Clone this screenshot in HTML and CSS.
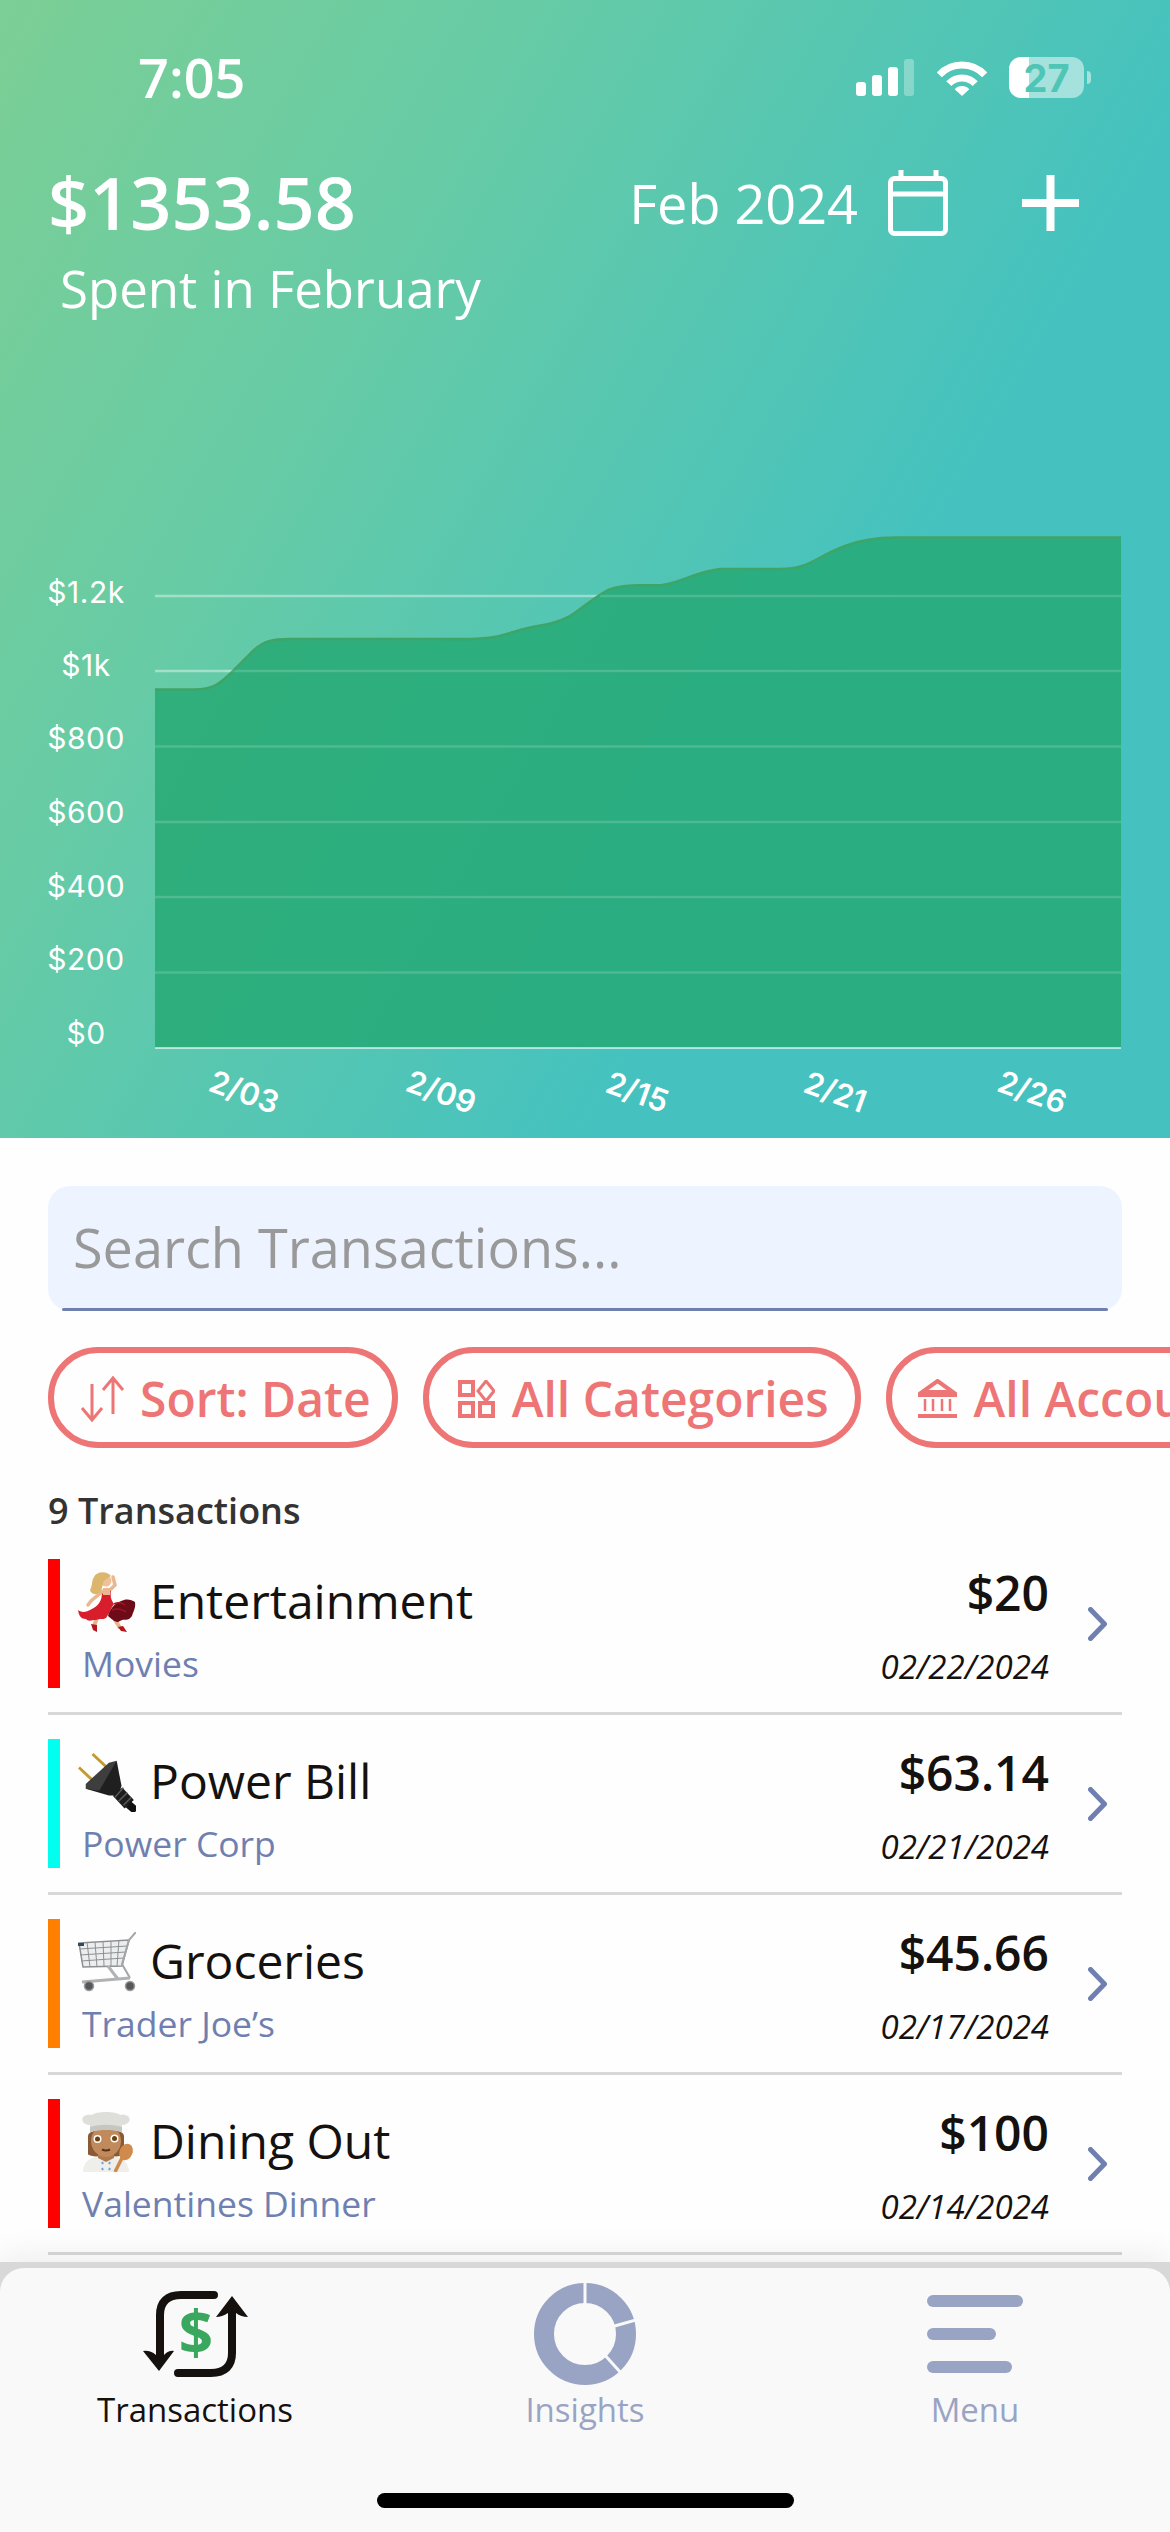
FILE: index.html
```html
<!DOCTYPE html>
<html lang="en">
<head>
  <meta charset="UTF-8" />
  <meta name="viewport" content="width=device-width, initial-scale=1.0"/>
  <title>Transactions</title>
  <link rel="stylesheet" href="styles.css">
</head>
<body>
<div class="screen">

  <header class="hero">
    <div class="status-bar">
      <span class="clock">7:05</span>
      <div class="status-icons">
        <svg class="signal" viewBox="0 0 58 37">
          <rect x="0" y="23" width="10" height="14" rx="3" fill="#fff"/>
          <rect x="16" y="16" width="10" height="21" rx="3" fill="#fff"/>
          <rect x="32" y="8" width="10" height="29" rx="3" fill="#fff"/>
          <rect x="48" y="0" width="10" height="37" rx="3" fill="#fff" opacity="0.3"/>
        </svg>
        <svg class="wifi" viewBox="0 0 50 37">
          <path d="M2.3 15.9A31 31 0 0 1 47.7 15.9" fill="none" stroke="#fff" stroke-width="7"/>
          <path d="M11.8 24.7A18 18 0 0 1 38.2 24.7" fill="none" stroke="#fff" stroke-width="7"/>
          <path d="M25 37L17.7 30.2A10 10 0 0 1 32.3 30.2Z" fill="#fff"/>
        </svg>
        <div class="battery">27</div>
      </div>
    </div>

    <div class="summary">
      <div>
        <div class="spent-amount">$1353.58</div>
        <div class="spent-label">Spent in February</div>
      </div>
      <div class="period">
        <span class="period-text">Feb 2024</span>
        <svg class="calendar" viewBox="0 0 60 66" fill="none" stroke="#fff" stroke-width="5">
          <rect x="2.5" y="8.5" width="55" height="55" rx="4"/>
          <path d="M2.5 24H57.5M13 0V8M48 0V8"/>
        </svg>
        <svg class="plus" viewBox="0 0 57 56" fill="none" stroke="#fff" stroke-width="8">
          <path d="M28.5 0V56M0 28H57"/>
        </svg>
      </div>
    </div>

    <svg class="chart" viewBox="0 500 1170 638">
      <path class="grid-back" d="M155 596H1121M155 671H1121M155 746.5H1121M155 822H1121M155 897H1121M155 972.5H1121"/>
      <path class="area" d="M155 689.5H195C212 689.5 220 684 232 672L254 650C264 641 272 639 290 639H470C500 639 510 632 528 628C545 624 552 625 570 616C580 610 590 600 608 590C618 586 628 585 662 585C680 583 695 572 720 569H780C810 569 815 557 845 546C860 540 875 537 900 537.5H1121V1048H155Z"/>
      <path class="area-line" d="M155 689.5H195C212 689.5 220 684 232 672L254 650C264 641 272 639 290 639H470C500 639 510 632 528 628C545 624 552 625 570 616C580 610 590 600 608 590C618 586 628 585 662 585C680 583 695 572 720 569H780C810 569 815 557 845 546C860 540 875 537 900 537.5H1121"/>
      <path class="grid-front" d="M225 671H1121M155 746.5H1121M155 822H1121M155 897H1121M155 972.5H1121M600 596H1121"/>
      <path d="M155 1048H1121" stroke="#fff" stroke-opacity="0.6" stroke-width="2"/>
      <g class="y-labels">
        <text x="86" y="603">$1.2k</text>
        <text x="86" y="676">$1k</text>
        <text x="86" y="749">$800</text>
        <text x="86" y="823">$600</text>
        <text x="86" y="896.5">$400</text>
        <text x="86" y="970">$200</text>
        <text x="86" y="1044">$0</text>
      </g>
      <g class="x-labels">
        <text transform="translate(244 1093) rotate(20)" y="10">2/03</text>
        <text transform="translate(441 1093) rotate(20)" y="10">2/09</text>
        <text transform="translate(637 1093) rotate(20)" y="10">2/15</text>
        <text transform="translate(835 1093) rotate(20)" y="10">2/21</text>
        <text transform="translate(1032 1093) rotate(20)" y="10">2/26</text>
      </g>
    </svg>
  </header>

  <div class="search-box">Search Transactions...</div>

  <div class="filters">
    <div class="pill">
      <svg class="pill-icon sort-icon" viewBox="0 0 45 46" fill="none" stroke="#ee7575" stroke-width="3">
        <path d="M12 8V44M2 32L12 44L22 32"/>
        <path d="M33 2V38M23 14L33 2L43 14"/>
      </svg>
      Sort: Date
    </div>
    <div class="pill pill-categories">
      <svg class="pill-icon cat-icon" viewBox="0 0 37 38" fill="none" stroke="#ee7575" stroke-width="4">
        <rect x="2" y="2" width="13" height="13"/>
        <path d="M28 1L36 11L28 21L20 11Z" stroke-width="3"/>
        <rect x="2" y="23" width="13" height="13"/>
        <rect x="22" y="23" width="13" height="13"/>
      </svg>
      All Categories
    </div>
    <div class="pill">
      <svg class="pill-icon bank-icon" viewBox="0 0 39 39" fill="none" stroke="#ee7575">
        <path d="M19.5 2L35 13H4Z" stroke-width="4"/>
        <path d="M0 16H39M0 37H39" stroke-width="4"/>
        <path d="M7 20V32M15 20V32M24 20V32M32 20V32" stroke-width="2.5"/>
      </svg>
      All Accounts
    </div>
  </div>

  <div class="count">9 Transactions</div>

  <ul class="tx-list">
    <li class="tx-row">
      <span class="tx-bar bar-red"></span>
      <div class="tx-main">
        <div class="tx-title">
          <svg class="emoji" viewBox="0 0 58 60">
            <path d="M19 46L16 54M36 46L42 56" stroke="#e6b48c" stroke-width="4" fill="none"/>
            <path d="M13 52L19 53L19 60L15 58ZM40 55L45 54L49 60L43 59Z" fill="#b5161e"/>
            <path d="M24 20C24 30 20 34 12 38C7 41 2 40 0 38C1 44 3 47 8 47C10 50 14 48 18 48C22 46 25 48 28 46C31 42 33 36 36 32C33 28 32 24 33 18Z" fill="#d81e2c"/>
            <path d="M30 44C32 36 38 30 46 28C50 27 54 28 57 30C58 36 55 40 54 44C50 50 46 46 42 49C38 52 34 47 30 44Z" fill="#6d0c18"/>
            <path d="M36 32C40 30 44 31 47 33M34 38C38 36 44 37 48 40" stroke="#a81422" stroke-width="1.5" fill="none"/>
            <path d="M25 19L13 29L10 33M33 17L37 13L35 5" stroke="#eab78f" stroke-width="3.5" fill="none" stroke-linecap="round"/>
            <path d="M25 16H32V23H25Z" fill="#eab78f"/>
            <circle cx="28" cy="9" r="5.5" fill="#f0c09a"/>
            <path d="M33 4C29 -1 19 -1 16 5C13 10 15 13 12 18C13 22 18 24 22 20C25 17 24 12 26 9C28 7 30 6 33 4Z" fill="#dcb66c"/>
          </svg>
          <span>Entertainment</span>
        </div>
        <div class="tx-sub">Movies</div>
      </div>
      <div class="tx-side">
        <div class="tx-amount">$20</div>
        <div class="tx-date">02/22/2024</div>
      </div>
      <svg class="chevron" viewBox="0 0 19 34" fill="none" stroke="#6f80b0" stroke-width="5" stroke-linecap="round" stroke-linejoin="round">
        <path d="M2.5 2.5L16.5 17L2.5 31.5"/>
      </svg>
    </li>

    <li class="tx-row">
      <span class="tx-bar bar-cyan"></span>
      <div class="tx-main">
        <div class="tx-title">
          <svg class="emoji" viewBox="0 0 60 60">
            <path d="M15 1L31 16M1 15L17 30" stroke="#c49a2c" stroke-width="3" fill="none"/>
            <path d="M40 8L45 34L42 44L32 44L8 37Z" fill="#1f1f1f"/>
            <path d="M40 8L32 10L8 32L8 37L22 39Z" fill="#3e3e3e"/>
            <path d="M41 40L53 53" stroke="#1c1c1c" stroke-width="13" fill="none"/>
            <path d="M38 46L47 36M42 50L51 41M47 54L55 46" stroke="#5a5a5a" stroke-width="1.5" fill="none"/>
            <path d="M52 53L60 60" stroke="#111" stroke-width="8" fill="none"/>
          </svg>
          <span>Power Bill</span>
        </div>
        <div class="tx-sub">Power Corp</div>
      </div>
      <div class="tx-side">
        <div class="tx-amount">$63.14</div>
        <div class="tx-date">02/21/2024</div>
      </div>
      <svg class="chevron" viewBox="0 0 19 34" fill="none" stroke="#6f80b0" stroke-width="5" stroke-linecap="round" stroke-linejoin="round">
        <path d="M2.5 2.5L16.5 17L2.5 31.5"/>
      </svg>
    </li>

    <li class="tx-row">
      <span class="tx-bar bar-orange"></span>
      <div class="tx-main">
        <div class="tx-title">
          <svg class="emoji" viewBox="0 0 58 60">
            <path d="M1 11L51 8L44 34L5 35Z" fill="#eceeee" stroke="#8d9092" stroke-width="1.5"/>
            <path d="M1.5 17L49 14M2 23L47.5 20M3 29L46 26M9 10L12 35M17 10L19 35M25 9L26 34M33 9L33 34M41 8L39 34" stroke="#8d9092" stroke-width="1" fill="none"/>
            <path d="M0 11H6V14H0Z" fill="#2f4a63"/>
            <path d="M58 0L51 8L44 32L52 46" stroke="#a4a6a8" stroke-width="2" fill="none"/>
            <path d="M4 50L52 46M30 34L36 42L40 47" stroke="#b0b2b4" stroke-width="3" fill="none"/>
            <circle cx="11" cy="54" r="4.5" fill="#55585a" stroke="#999" stroke-width="1.5"/>
            <circle cx="52" cy="54" r="4.5" fill="#55585a" stroke="#999" stroke-width="1.5"/>
          </svg>
          <span>Groceries</span>
        </div>
        <div class="tx-sub">Trader Joe’s</div>
      </div>
      <div class="tx-side">
        <div class="tx-amount">$45.66</div>
        <div class="tx-date">02/17/2024</div>
      </div>
      <svg class="chevron" viewBox="0 0 19 34" fill="none" stroke="#6f80b0" stroke-width="5" stroke-linecap="round" stroke-linejoin="round">
        <path d="M2.5 2.5L16.5 17L2.5 31.5"/>
      </svg>
    </li>

    <li class="tx-row">
      <span class="tx-bar bar-red"></span>
      <div class="tx-main">
        <div class="tx-title">
          <svg class="emoji" viewBox="0 0 52 60">
            <path d="M7 24C7 15 43 15 43 24V42C43 46 7 46 7 42Z" fill="#8a5a34"/>
            <path d="M2 60C3 47 12 44 25 44C38 44 47 47 48 60Z" fill="#eeeeea"/>
            <path d="M21 50L22 52M29 50L28 52M21 56L22 58M29 56L28 58" stroke="#6fa4d8" stroke-width="2"/>
            <path d="M17 38H33V46L25 50L17 46Z" fill="#b07a4e"/>
            <ellipse cx="25" cy="29" rx="15" ry="16" fill="#c08a5c"/>
            <circle cx="16.5" cy="27" r="4" fill="#fff"/>
            <circle cx="33.5" cy="26.5" r="4" fill="#fff"/>
            <circle cx="16.5" cy="27" r="2.5" fill="#6a4212"/>
            <circle cx="33.5" cy="26.5" r="2.5" fill="#6a4212"/>
            <path d="M21 37.5Q25 39.5 29 37.5" stroke="#5c2f18" stroke-width="2" fill="none"/>
            <path d="M9 13C-2 12 -1 1 11 3C15 -1 35 -1 39 3C51 1 52 12 41 13V20C30 17 20 17 9 20Z" fill="#dededa"/>
            <path d="M9 15C20 12 30 12 41 15V20C30 17 20 17 9 20Z" fill="#c6c6c1"/>
            <path d="M34 60L42 44" stroke="#d08b4c" stroke-width="3.5" fill="none"/>
            <ellipse cx="45" cy="40" rx="6.5" ry="8.5" transform="rotate(25 45 40)" fill="#d08b4c"/>
          </svg>
          <span>Dining Out</span>
        </div>
        <div class="tx-sub">Valentines Dinner</div>
      </div>
      <div class="tx-side">
        <div class="tx-amount">$100</div>
        <div class="tx-date">02/14/2024</div>
      </div>
      <svg class="chevron" viewBox="0 0 19 34" fill="none" stroke="#6f80b0" stroke-width="5" stroke-linecap="round" stroke-linejoin="round">
        <path d="M2.5 2.5L16.5 17L2.5 31.5"/>
      </svg>
    </li>
  </ul>

  <nav class="tab-bar">
    <div class="tab-panel">
      <div class="tab tab-active">
        <div class="tab-icon">
          <svg class="tx-icon" viewBox="0 0 105 86">
            <path d="M71 4H38C24 4 17 11 17 24V64" fill="none" stroke="#14110f" stroke-width="8" stroke-linecap="round"/>
            <path d="M16 80L0 60Q7 59 13 64H21Q26 59 31 60Z" fill="#14110f"/>
            <path d="M35 82H68C82 82 89 75 89 62V22" fill="none" stroke="#14110f" stroke-width="8" stroke-linecap="round"/>
            <path d="M89 5L105 26Q98 26 93 22H85Q79 26 73 26Z" fill="#14110f"/>
            <text class="tx-icon-dollar" x="53" y="63">$</text>
          </svg>
        </div>
        <span>Transactions</span>
      </div>
      <div class="tab">
        <div class="tab-icon">
          <svg class="donut" viewBox="0 0 102 102">
            <circle cx="51" cy="51" r="41" fill="none" stroke="#99a4c4" stroke-width="20"/>
            <path d="M51 24V-2M77 44L102 37M69 70L87 90" stroke="#f9f9f9" stroke-width="3" fill="none"/>
          </svg>
        </div>
        <span>Insights</span>
      </div>
      <div class="tab">
        <div class="tab-icon">
          <div class="menu-icon">
            <span class="menu-line line-long"></span>
            <span class="menu-line line-short"></span>
            <span class="menu-line line-mid"></span>
          </div>
        </div>
        <span>Menu</span>
      </div>
    </div>
    <div class="home-indicator"></div>
  </nav>

</div>
</body>
</html>
```

FILE: styles.css
```css
* {
  box-sizing: border-box;
}

html, body {
  margin: 0;
  padding: 0;
}

body {
  font-family: 'Open Sans', sans-serif;
  background: #fdfefd;
  color: #14110f;
}

.screen {
  position: relative;
  width: 1170px;
  height: 2532px;
  overflow: hidden;
}

/* top gradient area */
.hero {
  display: flex;
  flex-direction: column;
  height: 1138px;
  background: linear-gradient(120deg, #7ccf95 0%, #66cba6 30%, #45c2bf 68%);
  color: white;
}

.status-bar {
  display: flex;
  justify-content: space-between;
  height: 110px;
  padding: 57px 86px 0 138px;
}

.clock {
  font-size: 54px;
  font-weight: 600;
  line-height: 40px;
}

.status-icons {
  display: flex;
  align-items: flex-start;
}

.signal {
  width: 58px;
  height: 37px;
  margin-top: 2px;
}

.wifi {
  width: 50px;
  height: 37px;
  margin: 2px 22px 0 23px;
}

.battery {
  position: relative;
  display: flex;
  align-items: center;
  justify-content: center;
  width: 75px;
  height: 41px;
  border-radius: 12px;
  background: linear-gradient(to right, #fff 27%, rgba(255,255,255,0.5) 27%);
  color: #4fc5b5;
  font-family: 'Inter', sans-serif;
  font-size: 38px;
  font-weight: 700;
}

.battery::after {
  content: "";
  position: absolute;
  left: 78px;
  top: 14px;
  width: 4px;
  height: 13px;
  border-radius: 0 4px 4px 0;
  background: rgba(255,255,255,0.5);
}

.summary {
  display: flex;
  justify-content: space-between;
  padding: 44px 91px 0 48px;
}

.spent-amount {
  font-size: 72px;
  font-weight: 600;
  line-height: 96px;
}

.spent-label {
  margin: 4px 0 0 12px;
  font-size: 51px;
  line-height: 68px;
}

.period {
  display: flex;
  align-items: flex-start;
}

.period-text {
  margin-top: 14px;
  font-size: 54px;
  line-height: 70px;
}

.calendar {
  width: 60px;
  height: 66px;
  margin: 16px 0 0 30px;
}

.plus {
  width: 57px;
  height: 56px;
  margin: 21px 0 0 74px;
}

.chart {
  display: block;
  width: 1170px;
  height: 638px;
  margin-top: auto;
}

.grid-back {
  fill: none;
  stroke: white;
  stroke-opacity: 0.4;
  stroke-width: 2.5;
}

.grid-front {
  fill: none;
  stroke: white;
  stroke-opacity: 0.1;
  stroke-width: 2.5;
}

.area {
  fill: #21a770;
  fill-opacity: 0.78;
}

.area-line {
  fill: none;
  stroke: #3fa468;
  stroke-width: 2.5;
}

.y-labels text {
  fill: white;
  font-family: 'Inter', sans-serif;
  font-size: 30px;
  letter-spacing: 0.5px;
  text-anchor: middle;
}

.x-labels text {
  fill: white;
  font-family: 'Inter', sans-serif;
  font-size: 31px;
  font-weight: 600;
  text-anchor: middle;
}

/* search + filters */
.search-box {
  position: relative;
  height: 125px;
  margin: 48px 48px 0;
  padding-left: 25px;
  border-radius: 22px;
  background: #eef4ff;
  color: #999;
  font-size: 54px;
  line-height: 122px;
}

.search-box::after {
  content: "";
  position: absolute;
  left: 14px;
  right: 14px;
  bottom: 0;
  height: 3px;
  border-radius: 2px;
  background: #6f80b0;
}

.filters {
  display: flex;
  gap: 25px;
  margin: 36px 0 0 48px;
  overflow: hidden;
}

.pill {
  display: flex;
  align-items: center;
  flex-shrink: 0;
  height: 101px;
  padding: 2px 21px 0 26px;
  border: 6px solid #ee7575;
  border-radius: 50px;
  color: #ee7575;
  font-size: 48px;
  font-weight: 600;
  white-space: nowrap;
}

.pill-categories {
  padding: 2px 26px 0 29px;
}

.pill-icon {
  flex-shrink: 0;
  margin-right: 15px;
}

.sort-icon {
  width: 45px;
  height: 46px;
}

.cat-icon {
  width: 37px;
  height: 38px;
  margin-right: 17px;
}

.bank-icon {
  width: 39px;
  height: 39px;
  margin-right: 17px;
}

.count {
  margin: 39px 0 24px 48px;
  color: #333;
  font-size: 36px;
  font-weight: 600;
  line-height: 48px;
}

/* transaction rows */
.tx-list {
  list-style: none;
  margin: 0 48px;
  padding: 0;
}

.tx-row {
  display: flex;
  align-items: center;
  margin-bottom: 24px;
  padding-bottom: 24px;
  border-bottom: 3px solid #d8d8d8;
}

.tx-bar {
  flex-shrink: 0;
  width: 12px;
  height: 129px;
}

.bar-red {
  background: #ff0000;
}

.bar-cyan {
  background: #00ffee;
}

.bar-orange {
  background: #ff8000;
}

.tx-main {
  flex: 1;
  height: 129px;
  padding: 10px 0 0 18px;
}

.tx-title {
  display: flex;
  align-items: flex-start;
  font-size: 48px;
  line-height: 64px;
}

.emoji {
  flex-shrink: 0;
  width: 58px;
  height: 60px;
  margin: 3px 14px 0 0;
}

.tx-sub {
  margin: 5px 0 0 4px;
  color: #6f80b0;
  font-size: 35.5px;
  line-height: 50px;
}

.tx-side {
  height: 129px;
  padding-top: 4px;
  text-align: right;
}

.tx-amount {
  font-size: 48px;
  font-weight: 600;
  line-height: 60px;
}

.tx-date {
  margin-top: 20px;
  font-size: 33px;
  font-style: italic;
  line-height: 48px;
}

.chevron {
  flex-shrink: 0;
  width: 19px;
  height: 34px;
  margin: 0 15px 0 39px;
}

/* bottom tabs */
.tab-bar {
  position: absolute;
  left: 0;
  right: 0;
  top: 2262px;
  bottom: 0;
  padding-top: 6px;
  background: #d8d8d8;
  box-shadow: 0 -10px 28px rgba(0,0,0,0.06);
}

.tab-panel {
  display: flex;
  height: 100%;
  padding-top: 12px;
  border-radius: 24px 24px 0 0;
  background: #f9f9f9;
}

.tab {
  display: flex;
  flex-direction: column;
  align-items: center;
  width: 390px;
  color: #99a4c4;
  font-size: 33px;
  line-height: 46px;
}

.tab-active {
  color: #14110f;
}

.tab-icon {
  display: flex;
  align-items: center;
  justify-content: center;
  height: 107px;
}

.tx-icon {
  width: 105px;
  height: 86px;
}

.tx-icon-dollar {
  fill: #3aa75f;
  font-size: 60px;
  font-weight: 700;
  text-anchor: middle;
}

.donut {
  width: 102px;
  height: 102px;
}

.menu-icon {
  display: flex;
  flex-direction: column;
  gap: 21px;
  width: 96px;
}

.menu-line {
  display: block;
  height: 12px;
  border-radius: 6px;
  background: #99a4c4;
}

.line-long {
  width: 96px;
}

.line-short {
  width: 69px;
}

.line-mid {
  width: 85px;
}

.home-indicator {
  position: absolute;
  left: 377px;
  bottom: 24px;
  width: 417px;
  height: 15px;
  border-radius: 8px;
  background: #000;
}
```
